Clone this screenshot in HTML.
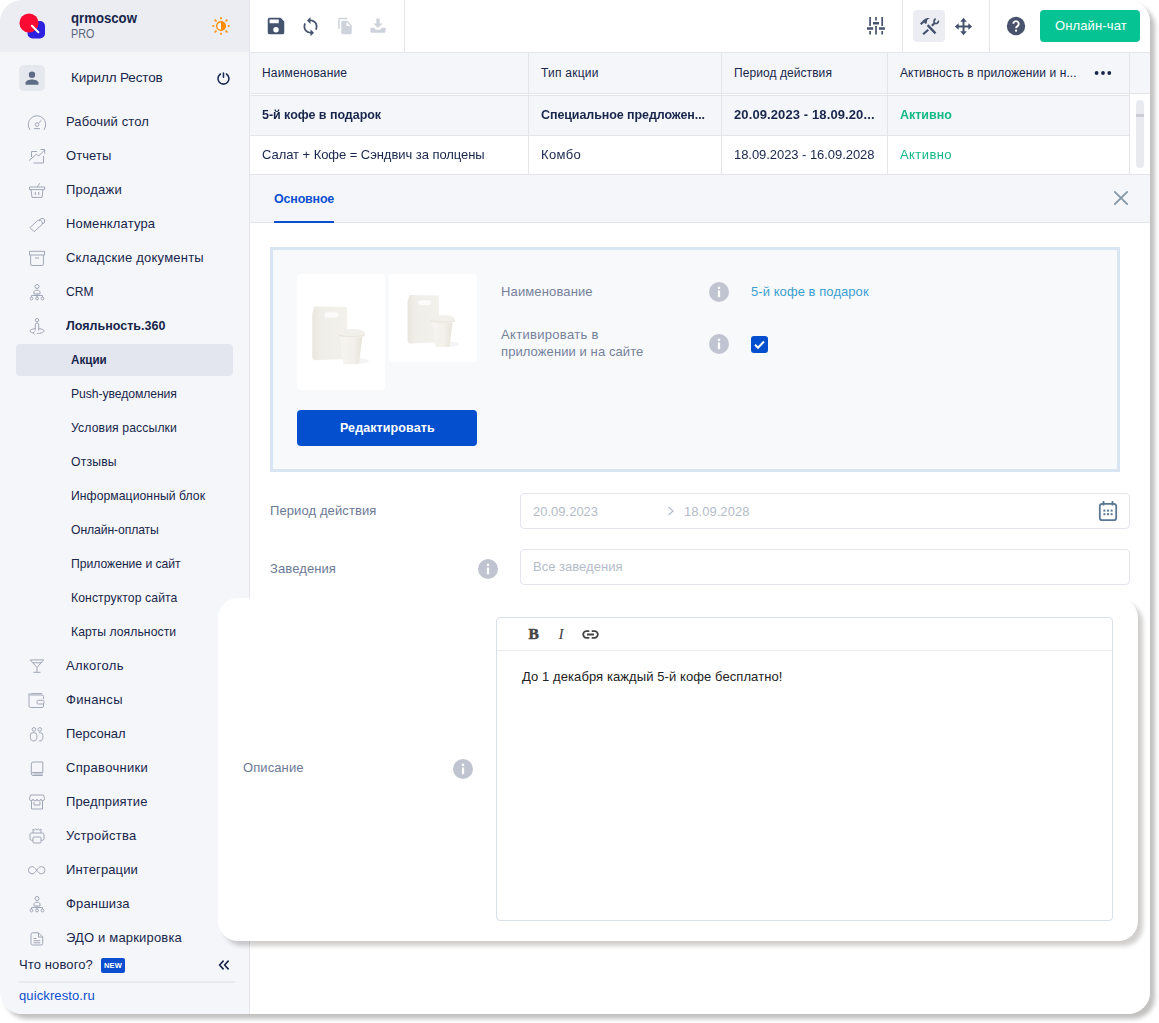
<!DOCTYPE html>
<html lang="ru">
<head>
<meta charset="utf-8">
<title>Quick Resto</title>
<style>
*{box-sizing:border-box;margin:0;padding:0}
html,body{width:1159px;height:1023px;overflow:hidden;background:#fff}
body{font-family:"Liberation Sans",sans-serif;color:#18264b;font-size:13px;position:relative}
.abs{position:absolute}
.app{position:absolute;left:0;top:0;width:1150px;height:1014px;border-radius:22px;background:#fff;box-shadow:5px 5px 4px rgba(25,18,15,.26);overflow:hidden}
.t{position:absolute;white-space:nowrap;line-height:16px}
/* sidebar */
.side{position:absolute;left:0;top:0;width:250px;height:1014px;background:#f5f6fa;border-right:1px solid #e4e5e9}
.side .hd{position:absolute;left:0;top:0;width:249px;height:52px;background:#ecedf3}
.mi{position:absolute;left:66px;font-size:13px;line-height:16px;white-space:nowrap;color:#18264b}
.si{position:absolute;left:71px;font-size:12.2px;line-height:16px;white-space:nowrap;color:#18264b}
.ic{position:absolute;left:27px;width:20px;height:20px;stroke:#a0a7b6;fill:none;stroke-width:1}
/* main */
.main{position:absolute;left:250px;top:0;width:900px;height:1014px;background:#fff}
.hl{position:absolute;background:#e4e5e9;height:1px}
.lb{font-size:13px;color:#75819b}
.lb2{font-size:13px;color:#6c7997}
.ph{font-size:13px;color:#b5bcc9}
.ov{position:absolute;left:218px;top:598px;width:920px;height:343px;border-radius:20px;background:#fff;box-shadow:5px 5px 4px rgba(25,18,15,.2)}
.vl{position:absolute;background:#e4e5e9;width:1px}
</style>
</head>
<body>
<div class="app">
  <!-- SIDEBAR -->
  <div class="side">
    <div class="hd"></div>
    <svg class="abs" style="left:16px;top:10px" width="32" height="32" viewBox="0 0 32 32"><rect x="11.5" y="11" width="17.5" height="17.5" rx="5" fill="#2d20e0"/><circle cx="13" cy="13" r="9.600" fill="#fb0a33"/><path d="M15.900 15.800L22.400 22.300" stroke="#fff" stroke-width="2" stroke-linecap="round"/></svg>
    <div class="t" id="t_org" style="left:71px;top:10px;font-size:14px;font-weight:700;transform-origin:0 50%;transform:scaleX(0.9412)">qrmoscow</div>
    <div class="t" id="t_pro" style="left:71px;top:27px;font-size:12px;color:#5d677b;line-height:14px;transform-origin:0 50%;transform:scaleX(0.8995)">PRO</div>
    <svg class="abs" style="left:211px;top:16px" width="20" height="20" viewBox="0 0 20 20"><path d="M17.50 10.00L17.90 10.00M15.09 15.09L15.87 15.87M10.00 17.50L10.00 17.90M4.91 15.09L4.13 15.87M2.50 10.00L2.10 10.00M4.91 4.91L4.13 4.13M10.00 2.50L10.00 2.10M15.09 4.91L15.87 4.13" stroke="#ff8c00" stroke-width="2" stroke-linecap="round" opacity=".85"/><circle cx="10" cy="10" r="4.300" fill="#f4f5f9" stroke="#ff8c00" stroke-width="1.400"/><path d="M10 5.400a4.600 4.600 0 0 1 0 9.200z" fill="#ff8c00"/></svg>
    <div class="abs" style="left:19px;top:65px;width:26px;height:26px;border-radius:5px;background:#e6e8ef"></div>
    <svg class="abs" style="left:24px;top:70px" width="16" height="16" viewBox="0 0 16 16"><circle cx="8" cy="4.700" r="3.200" fill="#5e6b84"/><path d="M1.500 14.700v-1.900c0-2.300 4.200-3.400 6.500-3.400s6.500 1.100 6.500 3.400v1.900z" fill="#5e6b84"/></svg>
    <div class="t" id="t_user" style="left:71px;top:70px;font-size:13.5px;letter-spacing:-0.137px">Кирилл Рестов</div>
    <svg class="abs" style="left:215px;top:70px" width="18" height="18" viewBox="0 0 18 18"><path d="M8.450 3v4.200" stroke="#1b2d55" stroke-width="1.600" fill="none" stroke-linecap="round"/><path d="M5.450 4a5.500 5.500 0 1 0 6 0" stroke="#1b2d55" stroke-width="1.600" fill="none" stroke-linecap="round"/></svg>
    <svg class="ic" style="top:111px" viewBox="0 0 20 20"><path d="M3.200 18.900A8.700 8.700 0 1 1 16.800 18.900"/><circle cx="10" cy="13.600" r="1.800"/><path d="M11.300 12.300L14.400 9.300M7 17.600h6"/></svg>
    <svg class="ic" style="top:145px" viewBox="0 0 20 20"><path d="M4.500 12V6.500H10M16.500 11v7H6.500M2.200 15.500L9.500 9.200l2.300 1.800L17.500 5M13.500 4.500h4.200v4.200"/></svg>
    <svg class="ic" style="top:179px" viewBox="0 0 20 20"><path d="M10.200 8l2.600-3.800M2.500 8h15.200v2.600H2.500zM4 10.600l1 7.800h10l1-7.800M8.300 13v3M11.700 13v3"/></svg>
    <svg class="ic" style="top:213px" viewBox="0 0 20 20"><path d="M3 14.600l7.900-7.300 2.300-.300 2.200 2.200-.300 2.300-8 7.200z"/><path d="M12.600 8.300a2.600 2.600 0 1 1 2.400 2.300"/></svg>
    <svg class="ic" style="top:247px" viewBox="0 0 20 20"><path d="M2.500 4.300h15.100V8H2.500zM3.600 8v9a1.500 1.500 0 0 0 1.500 1.500h9.800a1.500 1.500 0 0 0 1.500-1.500V8M8 11h4"/></svg>
    <svg class="ic" style="top:281px" viewBox="0 0 20 20"><circle cx="10" cy="5.500" r="2"/><path d="M7 13v-2.200l1.500-1.600h3l1.500 1.600V13zM10 13v3M4.500 16v-1.500h11V16"/><circle cx="4.500" cy="17.500" r="1.400"/><circle cx="10" cy="17.500" r="1.400"/><circle cx="15.500" cy="17.500" r="1.400"/></svg>
    <svg class="ic" style="top:315px" viewBox="0 0 20 20"><circle cx="10" cy="5.200" r="1.700"/><path d="M8.300 15.500V9.300a1.200 1.200 0 0 1 1.200-1.200h1a1.200 1.200 0 0 1 1.200 1.200v6.200M8.300 13.600C5 13.900 3 14.900 3 16c0 .900 1.200 1.600 3.200 2M11.700 13.600c3.300.300 5.300 1.300 5.300 2.400 0 1.400-3.100 2.500-7 2.500M7.700 16.600l-1.600 1.500 1.600 1.400"/></svg>
    <svg class="ic" style="top:655px" viewBox="0 0 20 20"><path d="M3.200 4.900h13.400L10 12.500zM10 12.500v4.800M6.500 17.300h7M5.800 7.800h8.400"/></svg>
    <svg class="ic" style="top:689px" viewBox="0 0 20 20"><path d="M3.500 4.600H15M16.600 10V7.500A1.500 1.500 0 0 0 15.100 6H3.500A1.500 1.500 0 0 1 2 4.600V17a1.500 1.500 0 0 0 1.500 1.500h11.600a1.500 1.500 0 0 0 1.500-1.500v-2.500"/><rect x="10" y="11.300" width="7" height="3.700" rx="1.200"/></svg>
    <svg class="ic" style="top:723px" viewBox="0 0 20 20"><circle cx="6.900" cy="6.400" r="1.800"/><circle cx="12.800" cy="6.400" r="1.800"/><path d="M3.300 14.300v-2a2.600 2.600 0 0 1 2.600-2.600h1.400a2.600 2.600 0 0 1 2.600 2.600v2c0 2.200-1.300 3.700-3.300 3.700s-3.300-1.500-3.300-3.700zM11.800 9.700h1.500a2.600 2.600 0 0 1 2.600 2.600v2c0 2.200-1.300 3.700-3.300 3.700h-.800"/></svg>
    <svg class="ic" style="top:757px" viewBox="0 0 20 20"><path d="M15.800 15.500V5H6.300a2 2 0 0 0-2 2v9.500M15.800 15.500H6a1.500 1.500 0 0 0 0 3h9.800M6.500 17h9.300"/></svg>
    <svg class="ic" style="top:791px" viewBox="0 0 20 20"><path d="M3.500 4h13l1 3.500a1.800 1.800 0 0 1-3.700.500 1.900 1.900 0 0 1-3.800 0 1.900 1.900 0 0 1-3.800 0A1.800 1.800 0 0 1 2.500 7.500zM4.500 10v8h11v-8M7 11v3h6v-3"/></svg>
    <svg class="ic" style="top:825px" viewBox="0 0 20 20"><path d="M6 8V4l1.300 1 1.400-1 1.300 1 1.300-1 1.400 1L14 4v4M6 15.300H4.500A1.500 1.500 0 0 1 3 13.800V9.500A1.500 1.500 0 0 1 4.500 8h11A1.500 1.500 0 0 1 17 9.500v4.300a1.500 1.500 0 0 1-1.500 1.500H14"/><rect x="6" y="12" width="8" height="6" rx="1"/></svg>
    <svg class="ic" style="top:859px" viewBox="0 0 20 20"><path d="M9.700 11.200C8.200 9 6.800 7.600 5 7.600a3.600 3.600 0 0 0 0 7.200c1.800 0 3.200-1.400 4.700-3.600s2.900-3.600 4.700-3.600a3.600 3.600 0 0 1 0 7.200c-1.800 0-3.200-1.400-4.700-3.600z"/></svg>
    <svg class="ic" style="top:893px" viewBox="0 0 20 20"><circle cx="10" cy="5.500" r="2"/><path d="M7 13v-2.200l1.500-1.600h3l1.500 1.600V13zM10 13v3M4.500 16v-1.500h11V16"/><circle cx="4.500" cy="17.500" r="1.400"/><circle cx="10" cy="17.500" r="1.400"/><circle cx="15.500" cy="17.500" r="1.400"/></svg>
    <svg class="ic" style="top:927px" viewBox="0 0 20 20"><path d="M11.500 5.800H5.500A1.500 1.500 0 0 0 4 7.300v9.200A1.500 1.500 0 0 0 5.500 18h8.700a1.500 1.500 0 0 0 1.500-1.500V10zM11.500 5.800V10h4.200M6.500 11.500h3M6.500 13.700h6.700M6.500 15.800h6.700"/></svg>
    <div class="mi" id="m0" style="top:114px;letter-spacing:0.108px">Рабочий стол</div>
    <div class="mi" id="m1" style="top:148px;letter-spacing:0.093px">Отчеты</div>
    <div class="mi" id="m2" style="top:182px;letter-spacing:0.251px">Продажи</div>
    <div class="mi" id="m3" style="top:216px;letter-spacing:0.168px">Номенклатура</div>
    <div class="mi" id="m4" style="top:250px;letter-spacing:0.230px">Складские документы</div>
    <div class="mi" id="m5" style="top:284px;font-size:13px;transform-origin:0 50%;transform:scaleX(0.9321)">CRM</div>
    <div class="mi" id="m_loy" style="top:318px;font-weight:700;font-size:13px;transform-origin:0 50%;transform:scaleX(0.9627)">Лояльность.360</div>
    <div class="abs" style="left:16px;top:344px;width:217px;height:32px;border-radius:4px;background:#e4e6ef"></div>
    <div class="si" id="s_act" style="top:352px;font-weight:700;font-size:12.2px;transform-origin:0 50%;transform:scaleX(0.9548)">Акции</div>
    <div class="si" id="s0" style="top:386px;letter-spacing:-0.079px">Push-уведомления</div>
    <div class="si" id="s1" style="top:420px;letter-spacing:0.121px">Условия рассылки</div>
    <div class="si" id="s2" style="top:454px;letter-spacing:0.189px">Отзывы</div>
    <div class="si" id="s3" style="top:488px;letter-spacing:0.055px">Информационный блок</div>
    <div class="si" id="s4" style="top:522px;letter-spacing:-0.104px">Онлайн-оплаты</div>
    <div class="si" id="s5" style="top:556px;letter-spacing:-0.039px">Приложение и сайт</div>
    <div class="si" id="s6" style="top:590px;letter-spacing:0.101px">Конструктор сайта</div>
    <div class="si" id="s7" style="top:624px;letter-spacing:0.060px">Карты лояльности</div>
    <div class="mi" id="n0" style="top:658px;letter-spacing:0.344px">Алкоголь</div>
    <div class="mi" id="n1" style="top:692px;letter-spacing:0.320px">Финансы</div>
    <div class="mi" id="n2" style="top:726px;letter-spacing:0.002px">Персонал</div>
    <div class="mi" id="n3" style="top:760px;letter-spacing:0.303px">Справочники</div>
    <div class="mi" id="n4" style="top:794px;letter-spacing:0.138px">Предприятие</div>
    <div class="mi" id="n5" style="top:828px;letter-spacing:0.254px">Устройства</div>
    <div class="mi" id="n6" style="top:862px;letter-spacing:0.118px">Интеграции</div>
    <div class="mi" id="n7" style="top:896px;letter-spacing:0.171px">Франшиза</div>
    <div class="mi" id="n8" style="top:930px;letter-spacing:0.171px">ЭДО и маркировка</div>
    <div class="t" id="t_new" style="left:19px;top:957px;font-size:13px;letter-spacing:0.116px">Что нового?</div>
    <div class="abs" id="newbadge" style="left:101px;top:958px;width:24px;height:15px;border-radius:2px;background:#0b4fd0;color:#fff;font-size:7.5px;font-weight:700;line-height:15px;text-align:center;letter-spacing:.2px">NEW</div>
    <svg class="abs" style="left:218px;top:959px" width="12" height="12" viewBox="0 0 12 12"><path d="M5.6 1.6L1.6 6l4 4.4M10.6 1.6L6.6 6l4 4.4" stroke="#18264b" stroke-width="1.6" fill="none"/></svg>
    <div class="hl" style="left:19px;top:981px;width:216px;height:2px;background:#e9eaf0"></div>
    <div class="t" id="t_qr" style="left:19px;top:988px;font-size:13px;color:#0b4fd0;letter-spacing:0.107px">quickresto.ru</div>
  </div>
  <!-- MAIN -->
  <div class="main">
    <div class="hl" style="left:0;top:52px;width:900px"></div>
    <div class="vl" style="left:154px;top:0;height:52px"></div>
    <div class="vl" style="left:652px;top:0;height:52px"></div>
    <div class="vl" style="left:739px;top:0;height:52px"></div>
    <svg class="abs" id="i_save" style="left:15px;top:15px" width="22" height="22" viewBox="0 0 24 24"><path fill="#46536f" d="M17 3H5a2 2 0 0 0-2 2v14a2 2 0 0 0 2 2h14a2 2 0 0 0 2-2V7l-4-4zm-5 16a3 3 0 1 1 0-6 3 3 0 0 1 0 6zm3-10H5V5h10v4z"/></svg>
    <svg class="abs" id="i_sync" style="left:50px;top:16px" width="21" height="21" viewBox="0 0 24 24"><path fill="#46536f" d="M12 4V1L8 5l4 4V6c3.31 0 6 2.69 6 6 0 1.01-.25 1.97-.7 2.8l1.46 1.46A7.93 7.93 0 0 0 20 12c0-4.42-3.58-8-8-8zm0 14c-3.31 0-6-2.690-6-6 0-1.010.25-1.970.7-2.800L5.240 7.740A7.930 7.930 0 0 0 4 12c0 4.420 3.580 8 8 8v3l4-4-4-4v3z"/></svg>
    <svg class="abs" id="i_copy" style="left:86px;top:17px" width="18" height="18" viewBox="0 0 24 24"><path fill="#cdd2db" d="M15 1H5a2 2 0 0 0-2 2v13h2V3h10V1zm-1 4H9a2 2 0 0 0-2 2v14a2 2 0 0 0 2 2h10a2 2 0 0 0 2-2V11l-6-6zm0 7V6.500l5.500 5.500H14z"/></svg>
    <svg class="abs" id="i_dl" style="left:118px;top:16px" width="20" height="20" viewBox="0 0 24 24"><path fill="#cdd2db" d="M10 3h4v6h3.500L12 14.500 6.500 9H10V3z"/><path fill="#cdd2db" d="M3 14h4.200l2.300 2.500h5l2.300-2.500H21v5a1 1 0 0 1-1 1H4a1 1 0 0 1-1-1v-5z"/></svg>
    <svg class="abs" id="i_sl" style="left:616px;top:16px" width="20" height="20" viewBox="0 0 20 20"><g stroke="#46536f" stroke-width="1.700" fill="none"><path d="M4.100 1.100v8.800M4.100 15v3.500M10 1.100v3.400M10 10v8.500M16.200 1.100v8.800M16.200 15v3.500"/><path d="M1 12.500h6.200M7 7.200h6M12.900 12.500h6" stroke-width="2.600"/></g></svg>
    <div class="abs" style="left:663px;top:10px;width:32px;height:32px;border-radius:4px;background:#ecedf3"></div>
    <svg class="abs" id="i_tools" style="left:663px;top:10px" width="32" height="32" viewBox="0 0 32 32"><path fill="#44516e" d="M7 13.600C9.500 11 11.500 8.700 14.200 8.100c1-.200 2-.100 2.600.200-1.400.400-2.600 1.500-2.900 3l-.100 1.900-1.200.800-1.500-1.400-2.600 2.500z"/><path d="M14.600 15.100l7.900 8.300" stroke="#44516e" stroke-width="2.300" fill="none"/><path d="M15.300 19.700L10.100 24.300" stroke="#44516e" stroke-width="2.200" fill="none"/><path fill="#44516e" d="M22.600 8C20.900 8.600 20 10 20.200 11.700l.200 1-2.300 2.200 1.500 1.500 2.300-2.200c1.800.500 3.700-.400 4.200-2.200.200-.700.100-1.400-.200-2l-1.700 1.700-.700 1-1.300-.200-.500-1.300 1.200-1.500z"/></svg>
    <svg class="abs" id="i_move" style="left:703px;top:16px" width="20" height="20" viewBox="0 0 20 20"><path d="M10.500 4v13M4 10.500h13" stroke="#46536f" stroke-width="2" fill="none"/><path fill="#46536f" d="M10.500 1.800l3.300 3.900H7.200zM10.500 19.200l3.300-3.900H7.200zM1.800 10.500l3.900-3.300v6.600zM19.200 10.500l-3.900-3.300v6.600z"/></svg>
    <svg class="abs" id="i_q" style="left:756px;top:16px" width="20" height="20" viewBox="0 0 20 20"><circle cx="10" cy="10" r="9.200" fill="#48526c"/><path d="M7.300 7.800a2.700 2.700 0 1 1 4.200 2.300c-.900.600-1.400 1-1.400 2.100" stroke="#fff" stroke-width="1.900" fill="none"/><circle cx="10.050" cy="14.700" r="1.150" fill="#fff"/></svg>
    <div class="abs" style="left:790px;top:10px;width:100px;height:32px;border-radius:4px;background:#06c394"></div>
    <div class="t" id="t_chat" style="left:805px;top:18px;font-size:13px;color:#fff;letter-spacing:0.126px">Онлайн-чат</div>
    <div class="abs" style="left:0;top:53px;width:880px;height:40px;background:#f5f6fa"></div>
    <div class="abs" style="left:880px;top:53px;width:20px;height:122px;background:#f5f6fa"></div>
    <div class="hl" style="left:0;top:93px;width:900px"></div>
    <div class="abs" style="left:0;top:95px;width:880px;height:40px;background:#f5f6fa"></div>
    <div class="hl" style="left:0;top:95px;width:880px"></div>
    <div class="hl" style="left:0;top:135px;width:880px"></div>
    <div class="hl" style="left:0;top:174px;width:900px"></div>
    <div class="vl" style="left:278px;top:53px;height:121px"></div>
    <div class="vl" style="left:471px;top:53px;height:121px"></div>
    <div class="vl" style="left:637px;top:53px;height:121px"></div>
    <div class="vl" style="left:879px;top:53px;height:121px"></div>
    <div class="abs" style="left:880px;top:94px;width:20px;height:80px;background:#fff"></div>
    <div class="abs" style="left:886px;top:100px;width:8px;height:68px;border-radius:4px;background:#e8eaf0"></div>
    <div class="abs" style="left:886px;top:114px;width:8px;height:3px;background:#cbced5"></div>
    <div class="t" id="h0" style="left:12px;top:65px;font-size:12px;letter-spacing:0.165px">Наименование</div>
    <div class="t" id="h1" style="left:291px;top:65px;font-size:12px;letter-spacing:0.232px">Тип акции</div>
    <div class="t" id="h2" style="left:484px;top:65px;font-size:12px;letter-spacing:0.073px">Период действия</div>
    <div class="t" id="h3" style="left:650px;top:65px;font-size:12px;letter-spacing:0.078px">Активность в приложении и н...</div>
    <svg class="abs" style="left:844px;top:69px" width="20" height="8" viewBox="0 0 20 8"><g fill="#18264b"><circle cx="2.600" cy="4" r="1.900"/><circle cx="9" cy="4" r="1.900"/><circle cx="15.300" cy="4" r="1.900"/></g></svg>
    <div class="t" id="r10" style="will-change:transform;left:12px;top:107px;font-size:12.5px;font-weight:700;color:#18264b;letter-spacing:-0.041px">5-й кофе в подарок</div>
    <div class="t" id="r11" style="will-change:transform;left:291px;top:107px;font-size:12.5px;font-weight:700;color:#18264b;letter-spacing:-0.088px">Специальное предложен...</div>
    <div class="t" id="r12" style="will-change:transform;left:484px;top:107px;font-size:13px;font-weight:700;color:#18264b;letter-spacing:0.106px">20.09.2023 - 18.09.20...</div>
    <div class="t" id="r13" style="will-change:transform;left:650px;top:107px;font-size:12.5px;font-weight:700;color:#12b886;letter-spacing:-0.011px">Активно</div>
    <div class="t" id="r20" style="will-change:transform;left:12px;top:147px;font-size:13px;color:#18264b;letter-spacing:-0.052px">Салат + Кофе = Сэндвич за полцены</div>
    <div class="t" id="r21" style="will-change:transform;left:291px;top:147px;font-size:13px;color:#18264b;letter-spacing:0.355px">Комбо</div>
    <div class="t" id="r22" style="will-change:transform;left:484px;top:147px;font-size:13px;color:#18264b;letter-spacing:-0.054px">18.09.2023 - 16.09.2028</div>
    <div class="t" id="r23" style="will-change:transform;left:650px;top:147px;font-size:13px;color:#12b886;letter-spacing:0.426px">Активно</div>
    <div class="abs" style="left:0;top:175px;width:900px;height:47px;background:#f5f6fa"></div>
    <div class="hl" style="left:0;top:222px;width:900px"></div>
    <div class="t" id="t_tab" style="left:24px;top:191px;font-size:12.5px;font-weight:700;color:#0b4fd0;letter-spacing:-0.198px">Основное</div>
    <div class="abs" style="left:24px;top:221px;width:60px;height:2px;background:#0b4fd0"></div>
    <svg class="abs" id="i_x" style="left:863px;top:190px" width="16" height="16" viewBox="0 0 16 16"><path d="M1.800 1.900l12.400 12.200M14.200 1.900L1.800 14.100" stroke="#8197aa" stroke-width="1.800" stroke-linecap="round" fill="none"/></svg>
    <div class="abs" style="left:20px;top:247px;width:850px;height:225px;border:3px solid #d7e6f2;background:#f8f9fb"></div>
    <div class="abs" id="tile1" style="left:47px;top:274px;width:88px;height:116px;border-radius:4px;background:#fff"></div>
    <div class="abs" id="tile2" style="left:139px;top:274px;width:88px;height:88px;border-radius:4px;background:#fff"></div>
    <svg width="0" height="0" style="position:absolute"><defs>
<linearGradient id="gb" x1="0" x2="1"><stop offset="0" stop-color="#e9e6de"/><stop offset=".25" stop-color="#f0eee8"/><stop offset="1" stop-color="#f3f1ec"/></linearGradient>
<linearGradient id="gc" x1="0" x2="1"><stop offset="0" stop-color="#f6f5f1"/><stop offset=".6" stop-color="#f2f0ea"/><stop offset="1" stop-color="#e6e3da"/></linearGradient>
</defs></svg>
    <svg class="abs" style="left:47px;top:274px" width="88" height="116" viewBox="0 0 88 116"><g>
<ellipse cx="63" cy="87" rx="9" ry="3" fill="#000" opacity=".045"/>
<path d="M17.500 32.500L50 33l.400 52L17 86.200l-1.700-2.200V40z" fill="url(#gb)"/>
<rect x="27.500" y="38.200" width="14" height="5.600" rx="2.800" fill="#fcfbf9"/>
<path d="M42.800 62h22.600l-3.200 26.500a2 2 0 0 1-2 1.800H48a2 2 0 0 1-2-1.800z" fill="url(#gc)"/>
<path d="M40.300 59.500c0-2 1.500-2.800 3.500-3.200 1-1 4-1.400 10.300-1.400s9.300.400 10.300 1.400c2 .400 3.500 1.200 3.500 3.200v2.300c0 1.200-6 2-13.800 2s-13.800-.800-13.800-2z" fill="#f2f0ea"/>
<path d="M40.500 60.500c2 1.300 7.500 1.900 13.600 1.900s11.600-.600 13.600-1.900" stroke="#e4e1d8" stroke-width=".8" fill="none"/>
</g></svg>
    <svg class="abs" style="left:139px;top:274px" width="88" height="88" viewBox="0 0 88 88"><g transform="translate(4.800 -8.200) scale(.9)">
<ellipse cx="63" cy="87" rx="9" ry="3" fill="#000" opacity=".045"/>
<path d="M17.500 32.500L50 33l.400 52L17 86.200l-1.700-2.200V40z" fill="url(#gb)"/>
<rect x="27.500" y="38.200" width="14" height="5.600" rx="2.800" fill="#fcfbf9"/>
<path d="M42.800 62h22.600l-3.200 26.500a2 2 0 0 1-2 1.800H48a2 2 0 0 1-2-1.800z" fill="url(#gc)"/>
<path d="M40.300 59.500c0-2 1.500-2.800 3.500-3.200 1-1 4-1.400 10.300-1.400s9.300.400 10.300 1.400c2 .400 3.500 1.200 3.500 3.200v2.300c0 1.200-6 2-13.800 2s-13.800-.800-13.800-2z" fill="#f2f0ea"/>
<path d="M40.500 60.500c2 1.300 7.500 1.900 13.600 1.900s11.600-.600 13.600-1.900" stroke="#e4e1d8" stroke-width=".8" fill="none"/>
</g></svg>
    <div class="abs" style="left:47px;top:410px;width:180px;height:36px;border-radius:4px;background:#034fcd"></div>
    <div class="t" id="t_edit" style="left:90px;top:420px;font-size:12.5px;font-weight:700;color:#fff;letter-spacing:0.093px">Редактировать</div>
    <div class="t lb" id="l_name" style="left:251px;top:284px;letter-spacing:0.134px">Наименование</div>
    <div class="t lb" id="l_act1" style="left:251px;top:327px;letter-spacing:0.314px">Активировать в</div>
    <div class="t lb" id="l_act2" style="left:251px;top:344px;letter-spacing:0.089px">приложении и на сайте</div>
    <svg class="abs" style="left:459px;top:282px" width="20" height="20" viewBox="0 0 20 20"><circle cx="10" cy="10" r="10" fill="#bfc4d0"/><rect x="8.850" y="4.700" width="2.300" height="2.300" fill="#fff"/><rect x="8.850" y="8.500" width="2.300" height="6.700" fill="#fff"/></svg>
    <svg class="abs" style="left:459px;top:334px" width="20" height="20" viewBox="0 0 20 20"><circle cx="10" cy="10" r="10" fill="#bfc4d0"/><rect x="8.850" y="4.700" width="2.300" height="2.300" fill="#fff"/><rect x="8.850" y="8.500" width="2.300" height="6.700" fill="#fff"/></svg>
    <div class="t" id="v_name" style="left:501px;top:284px;font-size:13px;color:#3c9fd2;letter-spacing:0.065px">5-й кофе в подарок</div>
    <div class="abs" style="left:501px;top:336px;width:17px;height:17px;border-radius:3px;background:#034fcd"></div>
    <svg class="abs" style="left:501px;top:336px" width="17" height="17" viewBox="0 0 17 17"><path d="M4 8.800l3 3 6-6.300" stroke="#fff" stroke-width="2" fill="none"/></svg>
    <div class="t lb2" id="l_per" style="left:20px;top:503px;letter-spacing:0.103px">Период действия</div>
    <div class="abs" style="left:270px;top:493px;width:610px;height:36px;border:1px solid #e3e6ec;border-radius:4px"></div>
    <div class="t ph" id="p_d1" style="left:283px;top:504px;letter-spacing:0.002px">20.09.2023</div>
    <svg class="abs" style="left:417px;top:506px" width="8" height="10" viewBox="0 0 8 10"><path d="M1.500 1l4.500 4-4.500 4" stroke="#b5bcc9" stroke-width="1.200" fill="none"/></svg>
    <div class="t ph" id="p_d2" style="left:434px;top:504px;letter-spacing:0.036px">18.09.2028</div>
    <svg class="abs" id="i_cal" style="left:848px;top:500px" width="20" height="22" viewBox="0 0 20 22"><rect x="1.800" y="3.800" width="16.400" height="16.400" rx="2.500" fill="none" stroke="#5a7894" stroke-width="1.800"/><path d="M5.500 1v4.500M14.500 1v4.500" stroke="#5a7894" stroke-width="1.800"/><g fill="#5a7894"><rect x="5.400" y="9.600" width="2" height="2"/><rect x="9" y="9.600" width="2" height="2"/><rect x="12.600" y="9.600" width="2" height="2"/><rect x="5.400" y="13.200" width="2" height="2"/><rect x="9" y="13.200" width="2" height="2"/><rect x="12.600" y="13.200" width="2" height="2"/></g></svg>
    <div class="t lb2" id="l_zav" style="left:20px;top:561px;letter-spacing:0.101px">Заведения</div>
    <svg class="abs" style="left:228px;top:559px" width="20" height="20" viewBox="0 0 20 20"><circle cx="10" cy="10" r="10" fill="#bfc4d0"/><rect x="8.850" y="4.700" width="2.300" height="2.300" fill="#fff"/><rect x="8.850" y="8.500" width="2.300" height="6.700" fill="#fff"/></svg>
    <div class="abs" style="left:270px;top:549px;width:610px;height:36px;border:1px solid #e3e6ec;border-radius:4px"></div>
    <div class="t ph" id="p_zav" style="left:283px;top:559px;letter-spacing:0.023px">Все заведения</div>
  </div>
</div>
<div class="ov">
<div class="t lb2" id="l_desc" style="left:25px;top:162px;letter-spacing:0.096px">Описание</div>
<svg class="abs" style="left:235px;top:161px" width="20" height="20" viewBox="0 0 20 20"><circle cx="10" cy="10" r="10" fill="#bfc4d0"/><rect x="8.850" y="4.700" width="2.300" height="2.300" fill="#fff"/><rect x="8.850" y="8.500" width="2.300" height="6.700" fill="#fff"/></svg>
<div class="abs" style="left:278px;top:19px;width:617px;height:304px;border:1px solid #d9e0e8;border-radius:4px"></div>
<div class="hl" style="left:279px;top:52px;width:615px;background:#ececee"></div>
<div class="t" id="e_b" style="left:310.500px;top:27px;font-size:15.500px;font-weight:700;font-family:'Liberation Serif',serif;color:#444;-webkit-text-stroke:.5px #444;line-height:18px">B</div>
<div class="t" id="e_i" style="left:340.500px;top:27px;font-size:15.500px;font-style:italic;font-family:'Liberation Serif',serif;color:#444;line-height:18px">I</div>
<svg class="abs" id="i_link" style="left:363.500px;top:31.800px" width="17" height="9" viewBox="0 0 17 9"><path d="M7.300 1.200H4.500a3.300 3.300 0 0 0 0 6.600h2.800M9.700 1.200h2.800a3.300 3.300 0 0 1 0 6.600H9.700M5 4.500h7" stroke="#444" stroke-width="1.800" fill="none"/></svg>
<div class="t" id="e_txt" style="left:304px;top:71px;font-size:13px;color:#222;letter-spacing:0.085px">До 1 декабря каждый 5-й кофе бесплатно!</div>
</div>
</body>
</html>
